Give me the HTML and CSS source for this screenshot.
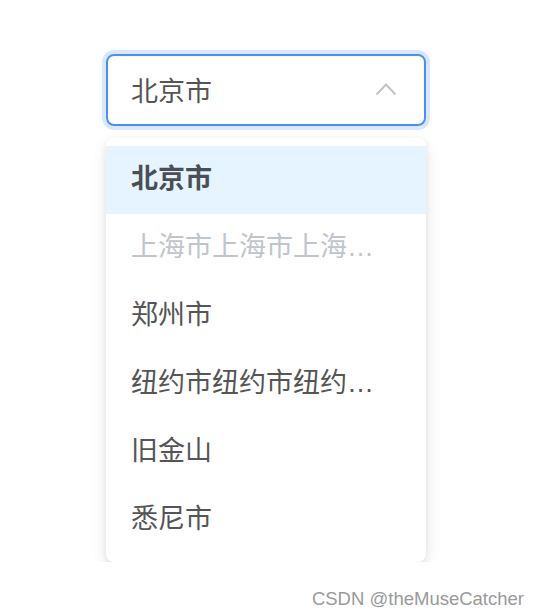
FILE: index.html
```html
<!DOCTYPE html>
<html lang="zh-CN">
<head>
  <meta charset="UTF-8">
  <title>Select</title>
  <link rel="stylesheet" href="styles.css">
</head>
<body>
  <div class="wrap">
    <!-- Select trigger -->
    <div class="select">
      <span class="select-value">北京市</span>
      <svg class="arrow" width="22" height="14" viewBox="0 0 22 14">
        <path d="M1.5 12.5 L11 2.5 L20.5 12.5" fill="none" stroke="#c0c4cc" stroke-width="2"/>
      </svg>
    </div>

    <!-- Options -->
    <ul class="dropdown">
      <li class="option selected">北京市</li>
      <li class="option disabled">上海市上海市上海市上海市</li>
      <li class="option">郑州市</li>
      <li class="option">纽约市纽约市纽约市纽约市</li>
      <li class="option">旧金山</li>
      <li class="option">悉尼市</li>
    </ul>
  </div>

  <div class="mark">CSDN @theMuseCatcher</div>
</body>
</html>
```

FILE: styles.css
```css
/* General Styles */
body {
  margin: 0;
  background-color: #fff;
  font-family: 'Liberation Sans', 'Noto Sans CJK SC', sans-serif;
  color: #555;
}

.wrap {
  width: 320px;
  padding: 54px 0 0 106px;
}

/* Select trigger */
.select {
  box-sizing: border-box;
  height: 72px;
  border: 2px solid #4a8ef7;
  border-radius: 8px;
  box-shadow: 0 0 0 4px rgba(64, 140, 255, 0.2);
  display: flex;
  align-items: center;
  justify-content: space-between;
  padding: 0 27px 2px 23px;
  font-size: 27px;
}

.arrow {
  display: block;
}

/* Dropdown */
.dropdown {
  list-style: none;
  margin: 12px 0 0;
  padding: 8px 0;
  background-color: #fff;
  border-radius: 8px;
  box-shadow: 0 6px 16px rgba(0, 0, 0, 0.1), 0 2px 6px rgba(0, 0, 0, 0.06);
}

.option {
  height: 68px;
  line-height: 67px;
  padding: 0 40px 0 25px;
  font-size: 27px;
  white-space: nowrap;
  overflow: hidden;
  text-overflow: ellipsis;
}

.option.selected {
  background-color: #e6f4ff;
  font-weight: 700;
  color: #4a4f55;
}

.option.disabled {
  color: #c0c4cc;
}

/* Watermark */
.mark {
  position: absolute;
  right: 16px;
  top: 588px;
  font-family: 'Liberation Sans', Arial, sans-serif;
  font-size: 18.5px;
  color: #9a9a9a;
}
```
